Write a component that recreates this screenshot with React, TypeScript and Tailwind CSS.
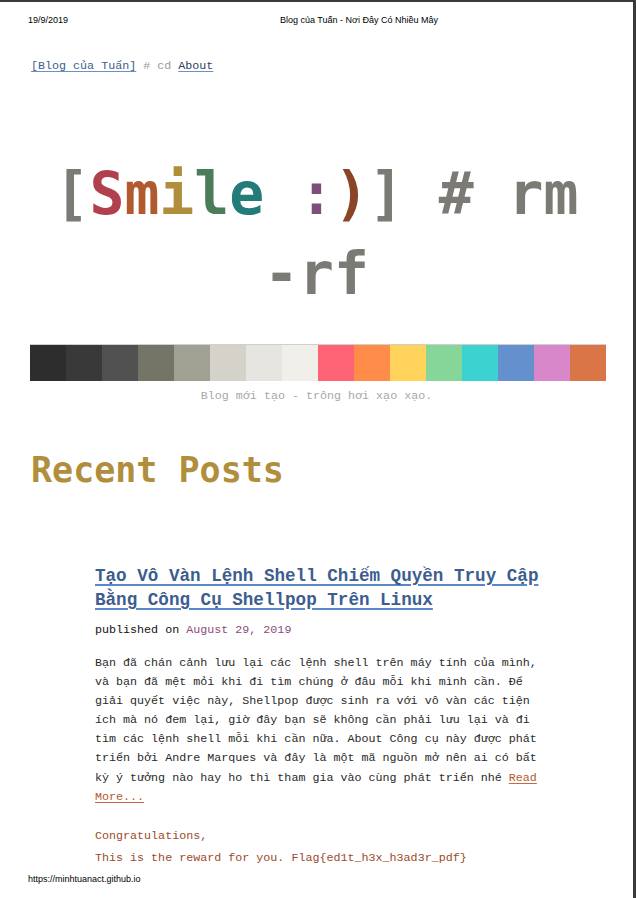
import React from "react";

const mono = { fontFamily: '"Liberation Mono", "DejaVu Sans Mono", monospace' };
const dmono = { fontFamily: '"DejaVu Sans Mono", "Liberation Mono", monospace' };
const sans = { fontFamily: '"Liberation Sans", Arial, sans-serif' };

const swatches = [
  "#2d2d2d", "#393939", "#515151", "#747566", "#a0a192", "#d5d3c9", "#e6e5df", "#f0efea",
  "#ff6376", "#ff8d49", "#ffd35c", "#85d698", "#3bd2cf", "#6490cd", "#d787ca", "#da7548",
];

const para = [
  "Bạn đã chán cảnh lưu lại các lệnh shell trên máy tính của mình,",
  "và bạn đã mệt mỏi khi đi tìm chúng ở đâu mỗi khi mình cần. Để",
  "giải quyết việc này, Shellpop được sinh ra với vô vàn các tiện",
  "ích mà nó đem lại, giờ đây bạn sẽ không cần phải lưu lại và đi",
  "tìm các lệnh shell mỗi khi cần nữa. About Công cụ này được phát",
  "triển bởi Andre Marques và đây là một mã nguồn mở nên ai có bất",
];

export default function App() {
  return (
    <div className="w-[636px] h-[898px] bg-white border-t-2 border-r-[3px] border-[#3a3a3a] overflow-hidden text-[#222]">
      {/* print header */}
      <div className="flex pt-[12px] pl-[28px] text-[9px] leading-[12px] text-black" style={sans}>
        <span className="w-[252px]">19/9/2019</span>
        <span>Blog của Tuấn - Nơi Đây Có Nhiều Mây</span>
      </div>

      <div className="pl-[31px] mt-[32px] text-[11.7px] leading-[16px] whitespace-pre" style={mono}>
        <span className="text-[#3d5d8c] underline decoration-[#6f8fc7] underline-offset-2">[Blog của Tuấn]</span>
        <span className="text-[#9a9a9a]"> # cd </span>
        <span className="text-[#2f3f5c] underline decoration-[#6f8fc7] underline-offset-2">About</span>
      </div>

      <div className="mt-[80px] px-[30px] text-center text-[58px] leading-[80px] font-bold text-[#7b7a74]" style={dmono}>
        [<span className="text-[#b0404c]">S</span><span className="text-[#b05a2e]">m</span><span className="text-[#b08e3c]">i</span><span className="text-[#4b7d59]">l</span><span className="text-[#237b7a]">e</span> <span className="text-[#7d4e7a]">:</span><span className="text-[#8a4426]">)</span>] # rm -rf
      </div>

      <div className="mt-[30px] mx-[30px] w-[576px] border-t border-[#cfcfcf] flex">
        {swatches.map((c) => (
          <div key={c} className="w-[36px] h-[36px]" style={{ backgroundColor: c }} />
        ))}
      </div>

      <div className="mt-[7px] text-center text-[11.7px] leading-[16px] text-[#a8a8a8]" style={mono}>
        Blog mới tạo - trông hơi xạo xạo.
      </div>

      <div className="mt-[45px] pl-[31px] text-[35px] leading-[42px] font-bold text-[#b08e3c]" style={dmono}>
        Recent Posts
      </div>

      <div className="pl-[95px]" style={mono}>
        <div className="mt-[73px] text-[17.6px] leading-[24px] font-bold text-[#3d5d8f] whitespace-pre">
          <div>
            <span className="underline decoration-[#5b87c9] underline-offset-[3px] decoration-2">Tạo Vô Vàn Lệnh Shell Chiếm Quyền Truy Cập</span>
          </div>
          <div>
            <span className="underline decoration-[#5b87c9] underline-offset-[3px] decoration-2">Bằng Công Cụ Shellpop Trên Linux</span>
          </div>
        </div>

        <div className="mt-[9px] text-[11.7px] leading-[19px] whitespace-pre">
          <span className="text-[#111]">published on </span>
          <span className="text-[#8a4d7c]">August 29, 2019</span>
        </div>

        <div className="mt-[14px] text-[11.7px] leading-[19.1px] text-[#2a2a2a] whitespace-pre">
          {para.map((l) => (
            <div key={l}>{l}</div>
          ))}
          <div>
            kỳ ý tưởng nào hay ho thì tham gia vào cùng phát triển nhé{" "}
            <span className="text-[#b35a30] underline decoration-[#c96a3e] underline-offset-2">Read</span>
          </div>
          <div>
            <span className="text-[#b35a30] underline decoration-[#c96a3e] underline-offset-2">More...</span>
          </div>
        </div>

        <div className="mt-[18px] text-[11.7px] leading-[22px] text-[#9c4a2c] whitespace-pre">
          <div>Congratulations,</div>
          <div>This is the reward for you. Flag{"{"}ed1t_h3x_h3ad3r_pdf{"}"}</div>
        </div>
      </div>

      <div className="mt-[4px] pl-[28px] text-[9px] leading-[12px] text-black" style={sans}>
        https://minhtuanact.github.io
      </div>
    </div>
  );
}
